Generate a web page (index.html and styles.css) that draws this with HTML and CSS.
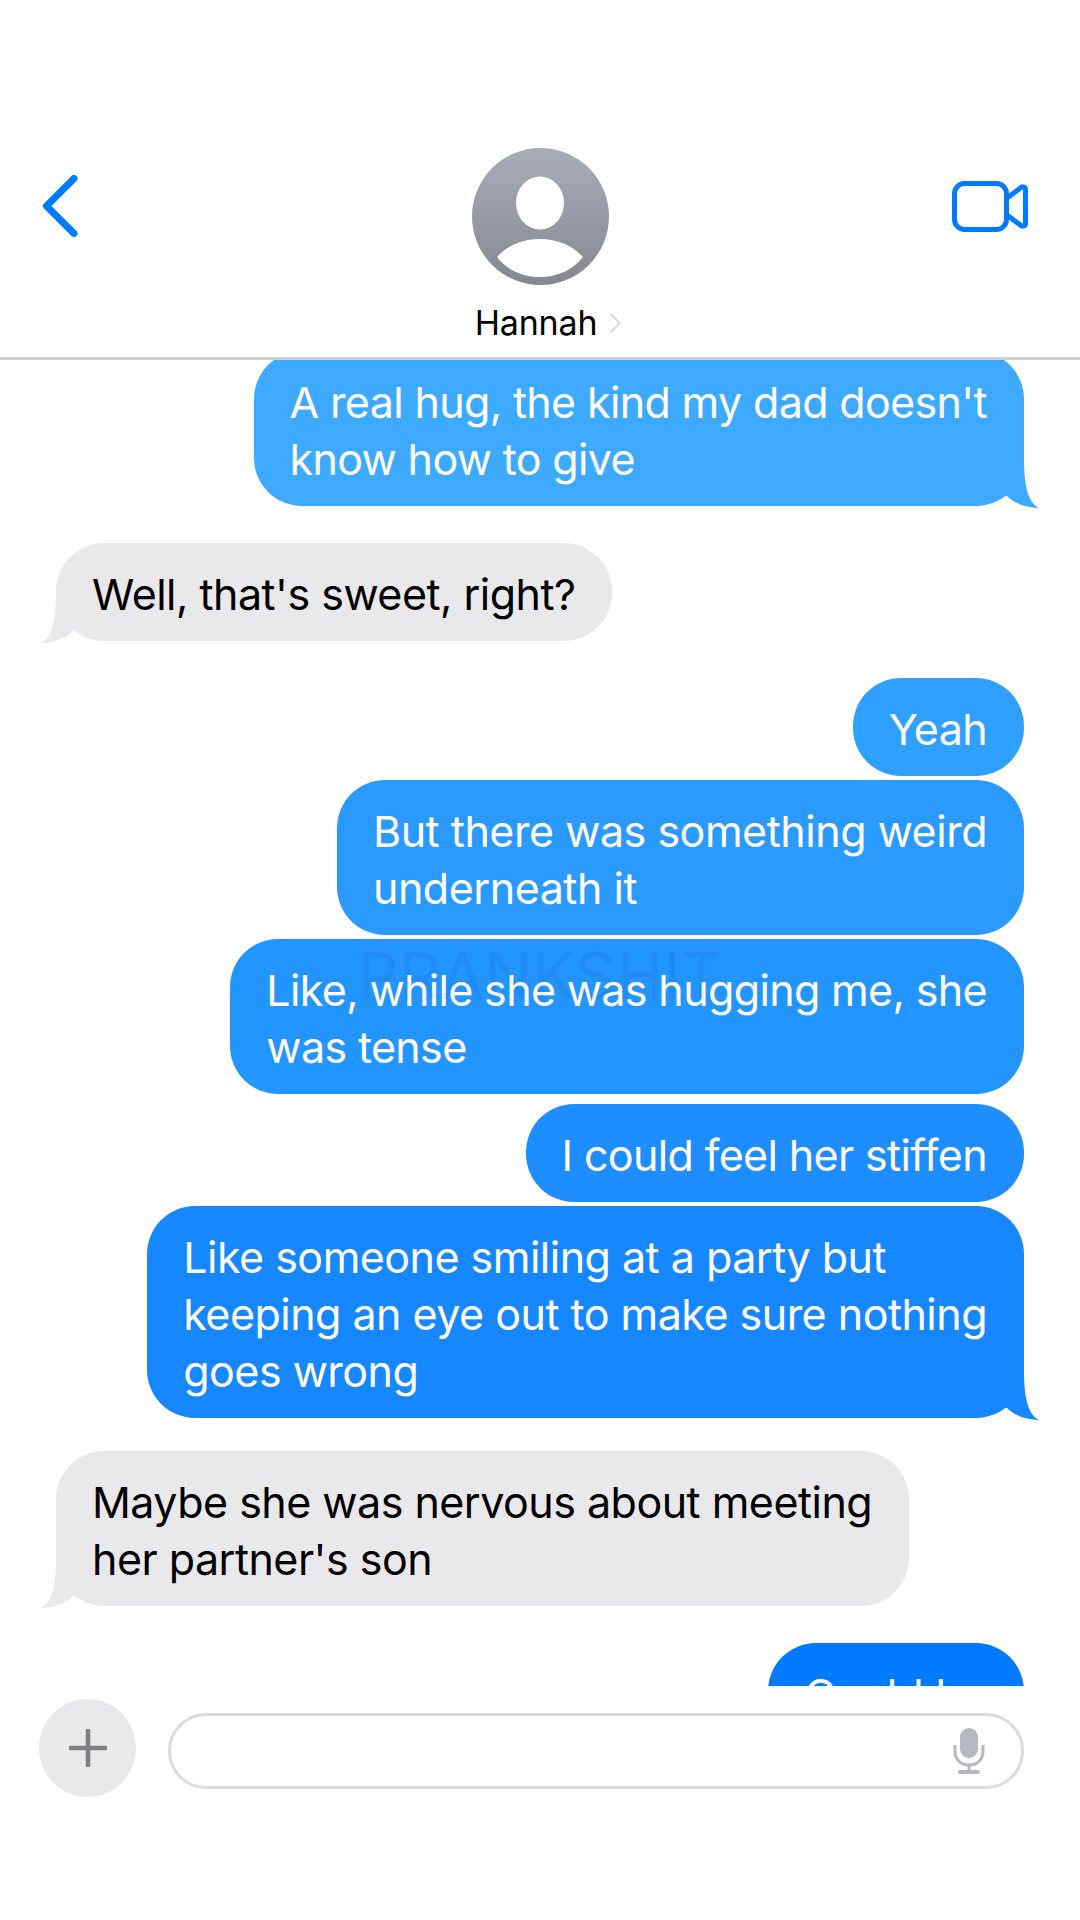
FILE: index.html
```html
<!DOCTYPE html>
<html lang="en">
<head>
  <meta charset="UTF-8" />
  <title>Hannah</title>
  <link rel="stylesheet" href="styles.css">
</head>
<body>
  <div class="phone">
    <div class="header">
      <svg class="back-icon" width="36" height="62" viewBox="0 0 36 62">
        <path d="M32 3.500 L4.500 31 L32 58.500" fill="none" stroke="#007aff" stroke-width="7" stroke-linecap="round" stroke-linejoin="round"/>
      </svg>
      <div class="contact">
        <svg class="avatar" width="137" height="137" viewBox="0 0 137 137">
          <defs>
            <linearGradient id="avatar-fill" x1="0" y1="0" x2="0" y2="1">
              <stop offset="0" stop-color="#a8adb9"/>
              <stop offset="1" stop-color="#85888f"/>
            </linearGradient>
          </defs>
          <circle cx="68.5" cy="68.5" r="68.5" fill="url(#avatar-fill)"/>
          <ellipse cx="68" cy="55" rx="24" ry="26.5" fill="#fff"/>
          <path d="M25 109 C35 98 50 91 68 91 C86 91 101 98 111 109 C101 122 85 129 68 129 C51 129 35 122 25 109 Z" fill="#fff"/>
        </svg>
        <div class="contact-name">
          <span>Hannah</span>
          <svg width="12" height="22" viewBox="0 0 12 22">
            <path d="M1.5 1.5 L10.5 11 L1.5 20.5" fill="none" stroke="#d4d4d6" stroke-width="1.8"/>
          </svg>
        </div>
      </div>
      <svg class="video-icon" width="76" height="51" viewBox="0 0 76 51">
        <rect x="2.5" y="2.5" width="52" height="46" rx="10" fill="none" stroke="#007aff" stroke-width="5"/>
        <path d="M55 17 L69 6.500 C71 5 73.500 6 73.500 8.500 V42.500 C73.500 45 71 46 69 44.500 L55 34" fill="none" stroke="#007aff" stroke-width="5" stroke-linejoin="round"/>
      </svg>
    </div>

    <div class="messages">
      <div class="bubble out shade-1 tail first">A real hug, the kind my dad doesn't<br>know how to give</div>
      <div class="bubble in tail gap-lg">Well, that's sweet, right?</div>
      <div class="bubble out shade-2 gap-lg">Yeah</div>
      <div class="bubble out shade-3 gap-sm">But there was something weird<br>underneath it</div>
      <div class="bubble out shade-4 gap-sm">Like, while she was hugging me, she<br>was tense</div>
      <div class="bubble out shade-5 gap-md">I could feel her stiffen</div>
      <div class="bubble out shade-6 tail gap-sm">Like someone smiling at a party but<br>keeping an eye out to make sure nothing<br>goes wrong</div>
      <div class="bubble in tail gap-tail">Maybe she was nervous about meeting<br>her partner's son</div>
      <div class="bubble out shade-7 gap-lg">Could be</div>
      <div class="watermark">PRANKSHIT</div>
    </div>

    <div class="composer">
      <div class="plus-btn">
        <svg width="38" height="38" viewBox="0 0 38 38">
          <path d="M19 1.500 V36.500 M1.500 19 H36.500" fill="none" stroke="#7d7d82" stroke-width="4.500" stroke-linecap="round"/>
        </svg>
      </div>
      <div class="input-box">
        <svg width="32" height="46" viewBox="0 0 32 46">
          <rect x="7" y="0" width="18" height="30" rx="9" fill="#b5b9c1"/>
          <path d="M2 17 V23 C2 32 8 37 16 37 C24 37 30 32 30 23 V17 M16 37 V44" fill="none" stroke="#b5b9c1" stroke-width="3"/>
          <path d="M7 44 H25" fill="none" stroke="#b5b9c1" stroke-width="4" stroke-linecap="round"/>
        </svg>
      </div>
    </div>
  </div>
</body>
</html>
```

FILE: styles.css
```css
* {
  margin: 0;
  padding: 0;
  box-sizing: border-box;
}

body {
  font-family: Inter, "Liberation Sans", sans-serif;
  background: white;
  color: #000;
}

.phone {
  width: 1080px;
  height: 1920px;
  overflow: hidden;
}

.header {
  height: 360px;
  padding: 148px 52px 0;
  display: grid;
  grid-template-columns: 1fr 137px 1fr;
  align-items: start;
  border-bottom: 3px solid #cfcfcf;
}

.back-icon {
  margin: 27px 0 0 -10px;
}

.video-icon {
  margin-top: 33px;
  justify-self: end;
}

.contact {
  display: flex;
  flex-direction: column;
  align-items: center;
}

.avatar {
  display: block;
}

.contact-name {
  flex: none;
  margin-top: 16px;
  margin-left: 16px;
  display: flex;
  align-items: center;
  gap: 12px;
  font-size: 34px;
  line-height: 44px;
  letter-spacing: -0.005em;
  white-space: nowrap;
}

.messages {
  position: relative;
  height: 1326px;
  padding: 0 56px;
  overflow: hidden;
  display: flex;
  flex-direction: column;
  align-items: flex-start;
}

.bubble {
  position: relative;
  flex: none;
  padding: 23px 37px 18px 36px;
  border-radius: 48px;
  font-size: 43px;
  line-height: 57px;
  letter-spacing: -0.015em;
  white-space: nowrap;
}

.out {
  align-self: flex-end;
  color: white;
}

/* the blue gets deeper down the thread */
.shade-1 { background: #3eaaff; }
.shade-2 { background: #30a0ff; }
.shade-3 { background: #2a9aff; letter-spacing: -0.011em; }
.shade-4 { background: #2395ff; }
.shade-5 { background: #1d8dff; }
.shade-6 { background: #1787ff; letter-spacing: -0.012em; }
.shade-7 { background: #007aff; letter-spacing: 0; }

.in {
  background: #e9e9eb;
  letter-spacing: -0.012em;
}

.tail::after {
  content: '';
  position: absolute;
  bottom: -2px;
  width: 40px;
  height: 50px;
  background: inherit;
}

.out.tail::after {
  right: -15px;
  clip-path: path('M25 0 C25 25 28 44 40 50 C28 50 16 46 8 38 L0 38 L0 0 Z');
}

.in.tail::after {
  left: -15px;
  clip-path: path('M15 0 C15 25 12 44 0 50 C12 50 24 46 32 38 L40 38 L40 0 Z');
}

.first {
  margin-top: -9px;
}

.gap-sm {
  margin-top: 4px;
}

.gap-md {
  margin-top: 10px;
}

.gap-tail {
  margin-top: 33px;
}

.gap-lg {
  margin-top: 37px;
}

.watermark {
  position: absolute;
  left: 358px;
  top: 584px;
  font-size: 64px;
  line-height: 64px;
  color: rgba(0, 0, 0, 0.05);
}

.composer {
  padding: 13px 56px 0 39px;
  display: flex;
  align-items: flex-start;
  gap: 32px;
}

.plus-btn {
  flex: none;
  width: 97px;
  height: 98px;
  border-radius: 50%;
  background: #e9e9eb;
  display: flex;
  align-items: center;
  justify-content: center;
}

.input-box {
  flex: 1;
  height: 76px;
  margin-top: 14px;
  border: 3px solid #dcdcdc;
  border-radius: 38px;
  padding-right: 36px;
  display: flex;
  align-items: center;
  justify-content: flex-end;
}
```
